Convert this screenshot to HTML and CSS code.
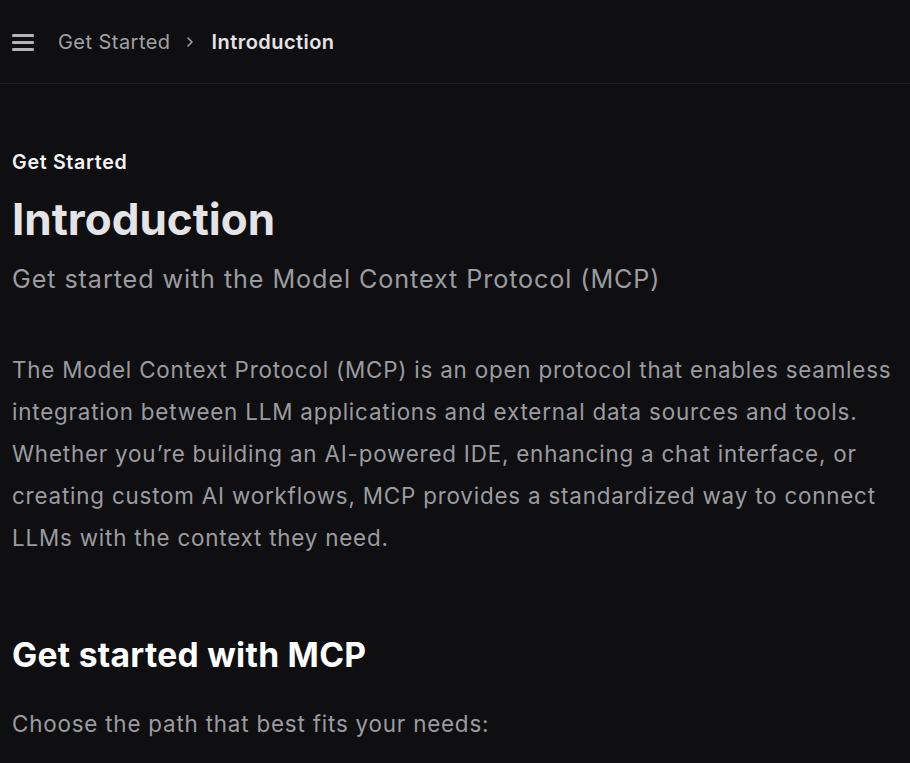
FILE: index.html
```html
<!DOCTYPE html>
<html>
	<head>
		<meta charset="utf-8">
		<title>Introduction - Model Context Protocol</title>
		<link rel="stylesheet" href="styles.css">
	</head>
	<body>
		<div class="topbar">
			<button class="menu-btn" aria-label="Open navigation">
				<svg width="22" height="18" viewBox="0 0 22 18">
					<rect x="0" y="1" width="22" height="3" rx="1.2"></rect>
					<rect x="0" y="8" width="22" height="3" rx="1.2"></rect>
					<rect x="0" y="15" width="22" height="3" rx="1.2"></rect>
				</svg>
			</button>
			<div class="crumbs">
				<span class="crumb">Get Started</span>
				<svg class="crumb-sep" width="8" height="12" viewBox="0 0 8 12">
					<path d="M2 2l4 4-4 4"></path>
				</svg>
				<span class="crumb current">Introduction</span>
			</div>
		</div>
		<div class="content">
			<div class="eyebrow">Get Started</div>
			<h1 class="title">Introduction</h1>
			<p class="lead">Get started with the Model Context Protocol (MCP)</p>
			<p class="text">The Model Context Protocol (MCP) is an open protocol that enables seamless integration between LLM applications and external data sources and tools. Whether you’re building an AI-powered IDE, enhancing a chat interface, or creating custom AI workflows, MCP provides a standardized way to connect LLMs with the context they need.</p>
			<h2 class="section">Get started with MCP</h2>
			<p class="text">Choose the path that best fits your needs:</p>
		</div>
	</body>
</html>
```

FILE: styles.css
```css
*{
	padding: 0px;
	margin: 0px;
	box-sizing: border-box;
}
body{
	background-color: #0f0f11;
	font-family: Inter, "Noto Sans", sans-serif;
	color: #9c9ca0;
	overflow: hidden;
}
.topbar{
	height: 84px;
	padding: 0px 12px;
	display: flex;
	align-items: center;
	border-bottom: 1px solid #1d1d20;
}
.menu-btn{
	background: none;
	border: none;
	display: flex;
	align-items: center;
	margin-right: 24px;
	padding-top: 1px;
}
.menu-btn rect{
	fill: #b4b4b8;
}
.crumbs{
	display: flex;
	align-items: center;
	font-size: 20px;
	line-height: 28px;
	letter-spacing: 0.45px;
}
.crumb{
	color: #a1a1a5;
}
.crumb.current{
	color: #e4e4e7;
	font-weight: 600;
}
.crumb-sep{
	margin: 0px 18px 0px 15px;
}
.crumb-sep path{
	fill: none;
	stroke: #a1a1a5;
	stroke-width: 1.6;
	stroke-linecap: round;
	stroke-linejoin: round;
}
.content{
	padding: 64px 12px 0px 12px;
}
.eyebrow{
	font-size: 19.6px;
	line-height: 28px;
	font-weight: 600;
	letter-spacing: 0.7px;
	color: #f4f4f5;
}
.title{
	margin-top: 18px;
	font-size: 44px;
	line-height: 50px;
	font-weight: 700;
	color: #e4e4e7;
}
.lead{
	margin-top: 17px;
	font-size: 25.2px;
	line-height: 36px;
	letter-spacing: 0.9px;
	color: #9c9ca0;
}
.text{
	font-size: 22.4px;
	line-height: 42px;
	letter-spacing: 0.8px;
}
.lead + .text{
	margin-top: 52px;
}
.section{
	margin-top: 76px;
	font-size: 33.6px;
	line-height: 40px;
	font-weight: 700;
	letter-spacing: 0.3px;
	color: #ffffff;
}
.section + .text{
	margin-top: 28px;
}
```
